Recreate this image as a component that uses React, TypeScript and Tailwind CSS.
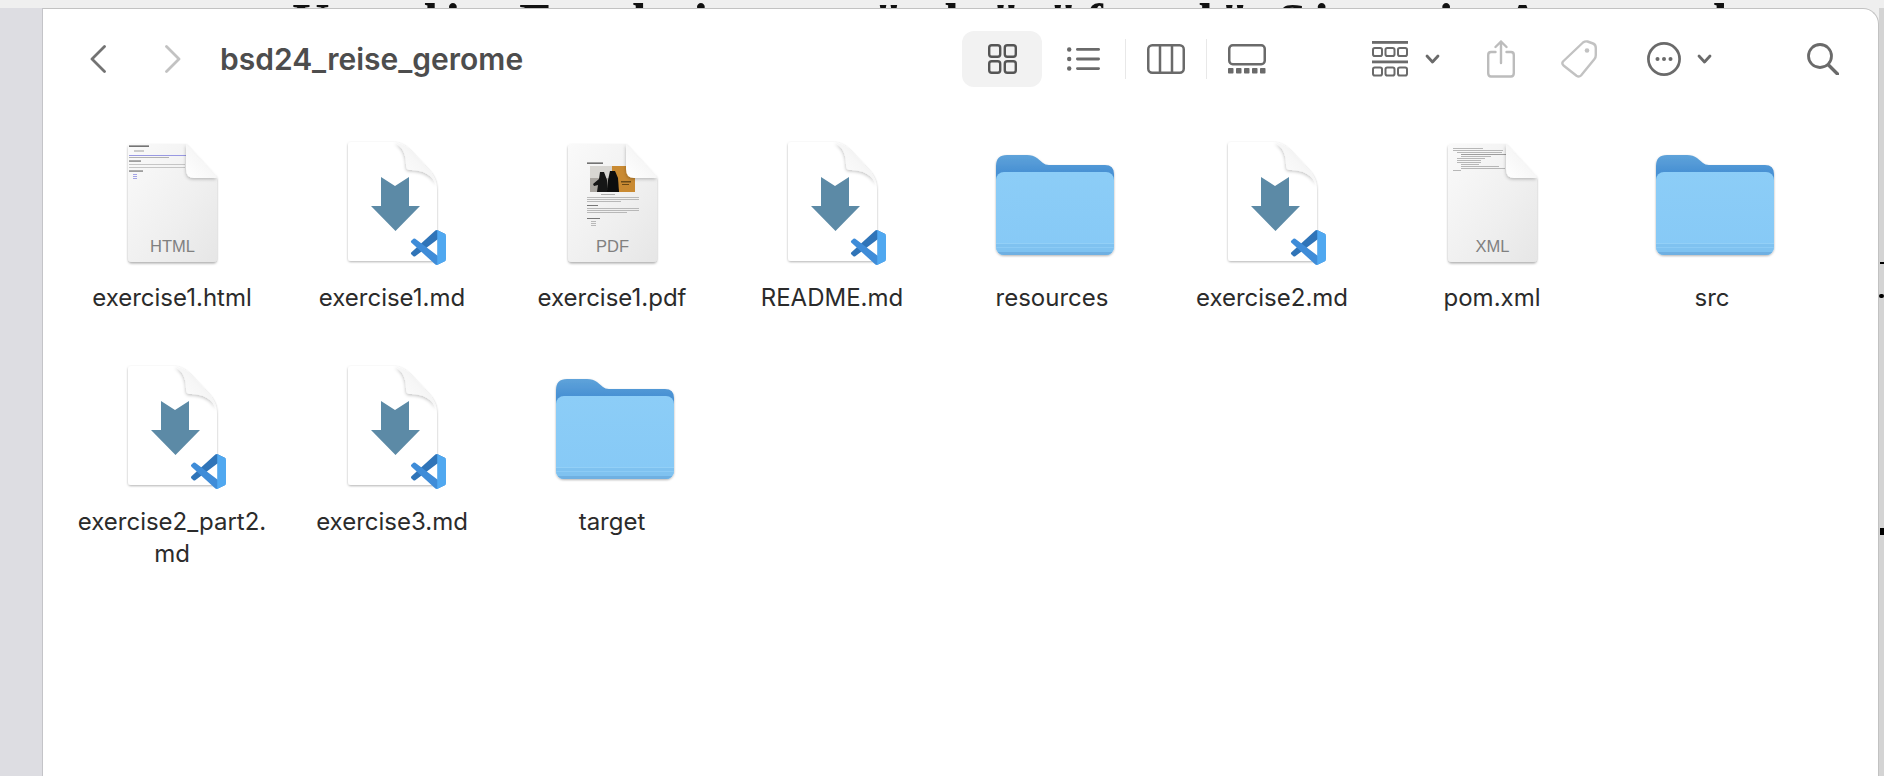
import React from 'react';

type FileKind = 'html' | 'md' | 'pdf' | 'xml' | 'folder';

interface FileItem {
  name: string;
  kind: FileKind;
}

const FILES: FileItem[] = [
  { name: 'exercise1.html', kind: 'html' },
  { name: 'exercise1.md', kind: 'md' },
  { name: 'exercise1.pdf', kind: 'pdf' },
  { name: 'README.md', kind: 'md' },
  { name: 'resources', kind: 'folder' },
  { name: 'exercise2.md', kind: 'md' },
  { name: 'pom.xml', kind: 'xml' },
  { name: 'src', kind: 'folder' },
  { name: 'exercise2_part2.\nmd', kind: 'md' },
  { name: 'exercise3.md', kind: 'md' },
  { name: 'target', kind: 'folder' },
];

const SharedDefs = () => (
  <svg className="absolute w-0 h-0">
    <defs>
      <linearGradient id="paper" x1="0" y1="0" x2="1" y2="1">
        <stop offset="0" stopColor="#fafafa" />
        <stop offset="0.6" stopColor="#efefef" />
        <stop offset="1" stopColor="#e6e6e6" />
      </linearGradient>
      <linearGradient id="curl" x1="0" y1="1" x2="1" y2="0">
        <stop offset="0" stopColor="#ffffff" />
        <stop offset="0.55" stopColor="#f6f6f6" />
        <stop offset="1" stopColor="#d9d9d9" />
      </linearGradient>
      <linearGradient id="folderBack" x1="0" y1="0" x2="0" y2="1">
        <stop offset="0" stopColor="#5fa3da" />
        <stop offset="0.3" stopColor="#4a92d4" />
        <stop offset="1" stopColor="#3f8bd0" />
      </linearGradient>
      <linearGradient id="folderFront" x1="0" y1="0" x2="0" y2="1">
        <stop offset="0" stopColor="#8ccdf7" />
        <stop offset="1" stopColor="#86c9f6" />
      </linearGradient>
      <clipPath id="folderClip">
        <rect x="9" y="34" width="118" height="83" rx="8" />
      </clipPath>
      <filter id="docShadow" x="-10%" y="-10%" width="120%" height="120%">
        <feDropShadow dx="0" dy="1.5" stdDeviation="1.2" floodColor="#000" floodOpacity="0.32" />
      </filter>
      <filter id="softShadow" x="-10%" y="-10%" width="120%" height="120%">
        <feDropShadow dx="0" dy="1" stdDeviation="0.9" floodColor="#000" floodOpacity="0.3" />
      </filter>
      <filter id="curlShadow" x="-30%" y="-30%" width="160%" height="160%">
        <feDropShadow dx="-0.5" dy="1.500" stdDeviation="1.5" floodColor="#000" floodOpacity="0.22" />
      </filter>
      <filter id="thumbBlur">
        <feGaussianBlur stdDeviation="0.35" />
      </filter>
    </defs>
  </svg>
);

const VsCodeBadge = () => (
  <g transform="translate(84 92) scale(0.35)">
    <path d="M96.46 10.8L75.86.87a6.23 6.23 0 0 0-7.1 1.2L1.32 63.6a4.17 4.17 0 0 0 0 6.16l5.51 5.01a4.17 4.17 0 0 0 5.32.24L93.4 13.3a4.14 4.14 0 0 1 6.64 3.3v-.24a6.25 6.25 0 0 0-3.54-5.63z" fill="#2f74b8" />
    <path d="M96.46 89.2L75.86 99.13a6.23 6.23 0 0 1-7.1-1.2L1.32 36.4a4.17 4.17 0 0 1 0-6.16l5.51-5.01a4.17 4.17 0 0 1 5.32-.24L93.4 86.7a4.14 4.14 0 0 0 6.64-3.3v.24a6.25 6.25 0 0 1-3.54 5.63z" fill="#3f8cd8" />
    <path d="M75.86 99.13a6.23 6.23 0 0 1-7.1-1.2c2.3 2.3 6.25.67 6.25-2.6V4.67c0-3.27-3.95-4.9-6.25-2.6a6.23 6.23 0 0 1 7.1-1.2L96.46 10.8A6.25 6.25 0 0 1 100 16.43v67.14a6.25 6.25 0 0 1-3.54 5.63z" fill="#50a8f0" />
  </g>
);

const MdIcon = () => (
  <svg width="130" height="130" viewBox="0 0 130 130">
    <path
      d="M23 4H66C73 4 78 7 83 12L100 30C106 36 110 42 110 52V120Q110 123 107 123H24Q21 123 21 120V7Q21 4 24 4Z"
      fill="#fff"
      filter="url(#softShadow)"
    />
    <path
      d="M68 4.500C76 6 80 9 84 13L100 30C105 35 108 40 109 46C105 37 96 32 84 32C80 32 79 30 79 26C79 16 75 8 68 4.500Z"
      fill="url(#curl)"
      filter="url(#curlShadow)"
    />
    <path d="M54 39L68 48L82 39V68H93L68.500 93L44 68H54Z" fill="#5c8aa6" />
    <VsCodeBadge />
  </svg>
);

const PaperDoc = ({ children, label }: { children?: React.ReactNode; label: string }) => (
  <svg width="130" height="130" viewBox="0 0 130 130">
    <path
      d="M24 6H79L110 40V120Q110 124 106 124H25Q21 124 21 120V9Q21 6 24 6Z"
      fill="url(#paper)"
      filter="url(#docShadow)"
    />
    {children}
    <path d="M79 6L110 39Q110 40 108 40H87Q79 40 79 31Z" fill="url(#curl)" filter="url(#curlShadow)" />
    <text
      x="65.500"
      y="114"
      textAnchor="middle"
      fontFamily="'Liberation Sans', sans-serif"
      fontSize="16.500"
      fill="#808080"
    >
      {label}
    </text>
  </svg>
);

const HtmlThumb = () => (
  <g filter="url(#thumbBlur)">
    <rect x="22" y="7.500" width="20" height="1.300" fill="#555" />
    <rect x="27" y="12" width="10" height="2" fill="#ccc" />
    <rect x="22" y="17" width="58" height="0.900" fill="#8f8fe0" />
    <rect x="22" y="19" width="40" height="0.900" fill="#aaa" />
    <rect x="22" y="22.500" width="12" height="1.100" fill="#666" />
    <rect x="22" y="26" width="56" height="0.800" fill="#bbb" />
    <rect x="22" y="29" width="56" height="0.800" fill="#bbb" />
    <rect x="22" y="32.500" width="14" height="1.100" fill="#666" />
    <rect x="26" y="36" width="4" height="0.900" fill="#9a9ae6" />
    <rect x="26" y="38" width="4" height="0.900" fill="#9a9ae6" />
    <rect x="26" y="40" width="4" height="0.900" fill="#9a9ae6" />
  </g>
);

const PdfThumb = () => (
  <g filter="url(#thumbBlur)">
    <rect x="40" y="24.500" width="16" height="1.300" fill="#555" />
    <rect x="43" y="28" width="22" height="26" fill="#a9a5a0" />
    <rect x="43" y="28" width="22" height="12" fill="#d8d6d2" />
    <rect x="65" y="28" width="23" height="26" fill="#c98a32" />
    <path d="M46 46L52 41L53 34H57L60 42L61 54H50L51 47L47 48Z" fill="#141414" />
    <path d="M60 54L61 42L63 33H68L71 40L72 54Z" fill="#0c0c0c" />
    <path d="M74 43h10v1.500h-10zM75 46h7v1h-7z" fill="#6b4a18" />
    <rect x="54" y="56" width="14" height="0.800" fill="#999" />
    <rect x="40" y="59" width="52" height="0.800" fill="#aaa" />
    <rect x="40" y="61" width="52" height="0.800" fill="#aaa" />
    <rect x="40" y="63" width="34" height="0.800" fill="#aaa" />
    <rect x="40" y="67" width="11" height="1" fill="#777" />
    <rect x="40" y="70" width="52" height="0.800" fill="#aaa" />
    <rect x="40" y="72" width="52" height="0.800" fill="#aaa" />
    <rect x="40" y="74" width="40" height="0.800" fill="#aaa" />
    <rect x="40" y="80" width="13" height="1" fill="#777" />
    <rect x="44" y="83" width="5" height="0.800" fill="#aaa" />
    <rect x="44" y="85" width="5" height="0.800" fill="#aaa" />
    <rect x="44" y="87" width="5" height="0.800" fill="#aaa" />
  </g>
);

const XmlThumb = () => (
  <g filter="url(#thumbBlur)" fill="#9c9c9c">
    <rect x="26" y="10" width="30" height="0.700" />
    <rect x="26" y="12" width="50" height="0.700" />
    <rect x="30" y="14" width="45" height="0.700" />
    <rect x="34" y="16" width="46" height="0.700" fill="#777" />
    <rect x="34" y="18" width="30" height="0.700" />
    <rect x="30" y="20" width="28" height="0.700" />
    <rect x="30" y="22" width="24" height="0.700" />
    <rect x="30" y="24" width="24" height="0.700" />
    <rect x="34" y="26" width="18" height="0.700" />
    <rect x="34" y="28" width="38" height="0.700" />
    <rect x="34" y="30" width="44" height="0.700" />
    <rect x="26" y="32" width="8" height="0.700" />
  </g>
);

const FolderIcon = () => (
  <svg width="130" height="130" viewBox="0 0 130 130">
    <g filter="url(#softShadow)">
      <path d="M9 28Q9 17 20 17H40Q46 17 50 20L56 25Q58 27 62 27H118Q127 27 127 36V70H9Z" fill="url(#folderBack)" />
      <rect x="9" y="34" width="118" height="83" rx="8" fill="url(#folderFront)" />
    </g>
    <g clipPath="url(#folderClip)">
      <rect x="9" y="105" width="118" height="12" fill="#7fc2f0" />
      <rect x="9" y="105" width="118" height="1" fill="#93d0f7" />
      <rect x="9" y="109" width="118" height="1" fill="#8ccbf5" />
      <rect x="9" y="114" width="118" height="3" fill="#6fb0e2" />
    </g>
  </svg>
);

const FileIcon = ({ kind }: { kind: FileKind }) => {
  if (kind === 'md') return <MdIcon />;
  if (kind === 'folder') return <FolderIcon />;
  if (kind === 'html') return <PaperDoc label="HTML"><HtmlThumb /></PaperDoc>;
  if (kind === 'pdf') return <PaperDoc label="PDF"><PdfThumb /></PaperDoc>;
  return <PaperDoc label="XML"><XmlThumb /></PaperDoc>;
};

const Chevron = () => (
  <svg width="15" height="10" viewBox="0 0 15 10" className="shrink-0">
    <path d="M2 2L7.500 8L13 2" fill="none" stroke="#6a6a6a" strokeWidth="2.800" strokeLinecap="round" strokeLinejoin="round" />
  </svg>
);

const Toolbar = () => (
  <div className="flex items-center h-[100px] pl-[47px] pr-[39px] shrink-0">
    <svg width="16" height="28" viewBox="0 0 16 28" className="shrink-0">
      <path d="M14.500 1.500L2 14L14.500 26.500" fill="none" stroke="#737373" strokeWidth="2.800" strokeLinecap="round" strokeLinejoin="round" />
    </svg>
    <svg width="16" height="28" viewBox="0 0 16 28" className="shrink-0 ml-[59px]">
      <path d="M1.500 1.500L14 14L1.500 26.500" fill="none" stroke="#c2c2c2" strokeWidth="2.800" strokeLinecap="round" strokeLinejoin="round" />
    </svg>
    <span className="ml-[39px] text-[30px] font-semibold text-[#4d4d4d] font-['Inter',sans-serif]">bsd24_reise_gerome</span>

    <div className="ml-auto w-20 h-14 rounded-xl bg-[#f2f2f2] flex items-center justify-center shrink-0">
      <svg width="29" height="30" viewBox="0 0 29 30">
        <g fill="none" stroke="#555555" strokeWidth="2.400">
          <rect x="1.200" y="1.200" width="11" height="11.500" rx="2.500" />
          <rect x="16.800" y="1.200" width="11" height="11.500" rx="2.500" />
          <rect x="1.200" y="17.300" width="11" height="11.500" rx="2.500" />
          <rect x="16.800" y="17.300" width="11" height="11.500" rx="2.500" />
        </g>
      </svg>
    </div>
    <svg width="33" height="24" viewBox="0 0 33 24" className="ml-[25px] shrink-0">
      <g fill="#6a6a6a">
        <circle cx="2.200" cy="2.500" r="2.200" />
        <circle cx="2.200" cy="12" r="2.200" />
        <circle cx="2.200" cy="21.500" r="2.200" />
        <rect x="9" y="1" width="24" height="2.800" rx="1.400" />
        <rect x="9" y="10.600" width="24" height="2.800" rx="1.400" />
        <rect x="9" y="20.200" width="24" height="2.800" rx="1.400" />
      </g>
    </svg>
    <div className="ml-[25px] w-px h-10 bg-[#e8e8e8] shrink-0" />
    <svg width="38" height="30" viewBox="0 0 38 30" className="ml-[21px] shrink-0">
      <g fill="none" stroke="#6a6a6a" strokeWidth="2.500">
        <rect x="1.250" y="1.250" width="35.500" height="27.500" rx="4" />
        <path d="M13 1.250V28.750M25 1.250V28.750" />
      </g>
    </svg>
    <div className="ml-[21px] w-px h-10 bg-[#e8e8e8] shrink-0" />
    <svg width="38" height="30" viewBox="0 0 38 30" className="ml-[21px] shrink-0">
      <rect x="1.250" y="1.250" width="35.500" height="19" rx="3.500" fill="none" stroke="#6a6a6a" strokeWidth="2.500" />
      <g fill="#6a6a6a">
        <rect x="0" y="24" width="5.500" height="5.500" rx="0.800" />
        <rect x="8" y="24" width="5.500" height="5.500" rx="0.800" />
        <rect x="16" y="24" width="5.500" height="5.500" rx="0.800" />
        <rect x="24" y="24" width="5.500" height="5.500" rx="0.800" />
        <rect x="32" y="24" width="5.500" height="5.500" rx="0.800" />
      </g>
    </svg>

    <svg width="36" height="36" viewBox="0 0 36 36" className="ml-[106px] shrink-0">
      <rect x="0" y="0" width="36" height="2.800" fill="#6a6a6a" />
      <rect x="0" y="19.500" width="36" height="2.800" fill="#6a6a6a" />
      <g fill="none" stroke="#6a6a6a" strokeWidth="2">
        <rect x="1" y="7" width="9" height="8" rx="1.800" />
        <rect x="13.500" y="7" width="9" height="8" rx="1.800" />
        <rect x="26" y="7" width="9" height="8" rx="1.800" />
        <rect x="1" y="26.500" width="9" height="8" rx="1.800" />
        <rect x="13.500" y="26.500" width="9" height="8" rx="1.800" />
        <rect x="26" y="26.500" width="9" height="8" rx="1.800" />
      </g>
    </svg>
    <div className="ml-[17px] shrink-0"><Chevron /></div>
    <svg width="28" height="38" viewBox="0 0 28 38" className="ml-[47px] shrink-0">
      <g fill="none" stroke="#bcbcbc" strokeWidth="2.400" strokeLinecap="round" strokeLinejoin="round">
        <path d="M8.500 12H4Q1.200 12 1.200 15V33Q1.200 36.500 4 36.500H24Q26.800 36.500 26.800 33V15Q26.800 12 24 12H19.500" />
        <path d="M14 23V1.500M8.500 7L14 1.500L19.500 7" />
      </g>
    </svg>
    <svg width="36" height="38" viewBox="0 0 36 38" className="ml-[46px] shrink-0">
      <path d="M22 2.500Q24 1 26.500 1.500L32 3.500Q34.800 4.500 34.800 8V15Q34.800 17.500 33.500 19L20 35.500Q18 37.500 15.500 35.800L2.500 25.500Q0.500 23.500 2 21.500Z" fill="none" stroke="#c2c2c2" strokeWidth="2.400" strokeLinejoin="round" />
      <circle cx="26" cy="10.500" r="2.300" fill="#c2c2c2" />
    </svg>
    <svg width="34" height="34" viewBox="0 0 34 34" className="ml-[50px] shrink-0">
      <circle cx="17" cy="17" r="15.600" fill="none" stroke="#6a6a6a" strokeWidth="2.700" />
      <g fill="#6a6a6a">
        <circle cx="10.500" cy="17" r="2" />
        <circle cx="17" cy="17" r="2" />
        <circle cx="23.500" cy="17" r="2" />
      </g>
    </svg>
    <div className="ml-4 shrink-0"><Chevron /></div>
    <svg width="32" height="32" viewBox="0 0 32 32" className="ml-[95px] shrink-0">
      <circle cx="13" cy="13" r="11.500" fill="none" stroke="#6a6a6a" strokeWidth="2.800" />
      <path d="M21.500 22L30.500 31" fill="none" stroke="#6a6a6a" strokeWidth="3.400" strokeLinecap="round" />
    </svg>
  </div>
);

const FileCell = ({ item }: { item: FileItem }) => (
  <div className="flex flex-col items-center">
    <FileIcon kind={item.kind} />
    <div className="mt-3.5 w-[210px] text-center whitespace-pre-line text-[24px] leading-8 text-[#2b2b2b] font-['Inter',sans-serif]">
      {item.name}
    </div>
  </div>
);

export default function App() {
  return (
    <div className="relative w-[1884px] h-[776px] flex flex-col overflow-hidden bg-[#efefef]">
      <SharedDefs />
      <div className="h-2 shrink-0 overflow-hidden pl-[292px] bg-[#efefef]">
        <div className="whitespace-nowrap -mt-[9px] text-[52px] leading-[64px] font-bold tracking-[7.700px] text-[#111] font-['Liberation_Serif',serif]">
          Um die Funktionen "alt" "fund" Sie mit Anwendung
        </div>
      </div>
      <div className="flex flex-1 min-h-0">
        <div className="w-[43px] bg-[#dddde2] border-r border-[#c4c4c8] shrink-0" />
        <div className="flex-1 flex flex-col bg-white rounded-tr-2xl border-t border-r border-[#c2c2c2] min-w-0">
          <Toolbar />
          <div className="grid grid-cols-[repeat(8,220px)] auto-rows-[224px] pl-[19px] pt-[29px]">
            {FILES.map((f) => (
              <FileCell key={f.name} item={f} />
            ))}
          </div>
        </div>
        <div className="w-[5px] bg-[#d4d4d4] shrink-0 flex flex-col items-end">
          <div className="w-[4px] h-[2px] bg-black mt-[254px]" />
          <div className="w-[5px] h-[4px] bg-black mt-[30px] rounded-sm" />
          <div className="w-[4px] h-[7px] bg-black mt-[230px]" />
        </div>
      </div>
    </div>
  );
}
